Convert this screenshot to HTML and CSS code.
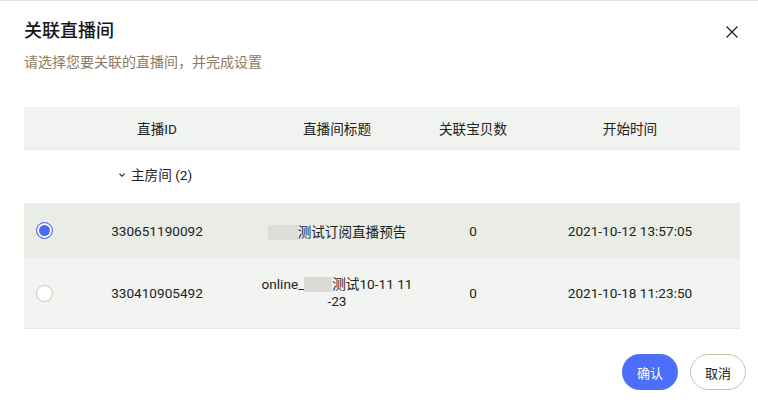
FILE: index.html
```html
<!DOCTYPE html>
<html lang="zh-CN">
<head>
    <meta charset="UTF-8">
    <title>关联直播间</title>
    <link rel="stylesheet" href="styles.css">
</head>
<body>
    <div class="dialog">
        <div class="dialogHead">
            <div>
                <h1 class="dialogTitle">关联直播间</h1>
                <p class="dialogDesc">请选择您要关联的直播间，并完成设置</p>
            </div>
            <button class="closeBtn" aria-label="关闭">
                <svg width="14" height="14" viewBox="0 0 14 14">
                    <path d="M1.5 1.5 L12.5 12.5 M12.5 1.5 L1.5 12.5" stroke="#222" stroke-width="1.3" fill="none"/>
                </svg>
            </button>
        </div>

        <table class="liveTable">
            <colgroup>
                <col class="colRadio">
                <col class="colId">
                <col class="colTitle">
                <col class="colCount">
                <col class="colTime">
            </colgroup>
            <thead>
                <tr>
                    <th></th>
                    <th>直播ID</th>
                    <th>直播间标题</th>
                    <th>关联宝贝数</th>
                    <th>开始时间</th>
                </tr>
            </thead>
            <tbody>
                <tr class="groupRow">
                    <td></td>
                    <td colspan="4">
                        <span class="groupName">
                            <svg width="8" height="8" viewBox="0 0 8 8"><path d="M1.5 2.8 L4 5.2 L6.5 2.8" stroke="#333" stroke-width="1.2" fill="none"/></svg>
                            主房间 (2)
                        </span>
                    </td>
                </tr>
                <tr class="dataRow selected">
                    <td><span class="radio checked"></span></td>
                    <td>330651190092</td>
                    <td><span class="blurBox"></span>测试订阅直播预告</td>
                    <td>0</td>
                    <td>2021-10-12 13:57:05</td>
                </tr>
                <tr class="dataRow">
                    <td><span class="radio"></span></td>
                    <td>330410905492</td>
                    <td class="wrapTitle">online_<span class="blurBox small"></span>测试10-11 11<br>-23</td>
                    <td>0</td>
                    <td>2021-10-18 11:23:50</td>
                </tr>
            </tbody>
        </table>

        <div class="dialogFoot">
            <button class="btn btnPrimary">确认</button>
            <button class="btn btnGhost">取消</button>
        </div>
    </div>
</body>
</html>
```

FILE: styles.css
```css
body {
    margin: 0;
    background-color: #ffffff;
    font-family: Roboto, "Noto Sans CJK SC", sans-serif;
    color: #222222;
}

.dialog {
    height: 403px;
    border-top: 1px solid #dddddd;
    padding: 0 18px 0 24px;
    box-sizing: border-box;
    display: flex;
    flex-direction: column;
}

.dialogHead {
    display: flex;
    justify-content: space-between;
    align-items: flex-start;
    padding-top: 17px;
}

.dialogTitle {
    margin: 0;
    font-size: 18px;
    font-weight: 500;
    line-height: 26px;
    color: #151515;
}

.dialogDesc {
    margin: 8px 0 0 0;
    font-size: 14px;
    line-height: 20px;
    color: #8a7d62;
}

.closeBtn {
    border: none;
    background: none;
    padding: 0;
    margin: 6px 0 0 0;
    width: 16px;
    height: 16px;
    display: flex;
    align-items: center;
    justify-content: center;
    cursor: pointer;
}

.liveTable {
    margin-top: 35px;
    width: 716px;
    border-collapse: collapse;
    table-layout: fixed;
    font-size: 13.6px;
}

.colRadio { width: 42px; }
.colId { width: 182px; }
.colTitle { width: 178px; }
.colCount { width: 94px; }
.colTime { width: 220px; }

.liveTable th {
    height: 42px;
    background-color: #f0f3ef;
    font-weight: 400;
    color: #222222;
    border-bottom: 1px solid #e6e9e4;
    text-align: center;
    padding: 0;
}

.liveTable td {
    text-align: center;
    padding: 0 8px;
}

.groupRow td {
    height: 38px;
    text-align: left;
    vertical-align: top;
    padding: 15px 0 0 0;
}

.groupName {
    display: inline-flex;
    align-items: center;
    gap: 5px;
    margin-left: 52px;
    font-size: 13.6px;
    line-height: 20px;
}

.dataRow td {
    height: 55px;
    background-color: #f1f4f0;
}

.dataRow.selected td {
    background-color: #e9ede5;
}

.dataRow:last-child td {
    height: 70px;
    border-bottom: 1px solid #e6e9e4;
    line-height: 17px;
}

.radio {
    display: inline-block;
    width: 17px;
    height: 17px;
    border: 1px solid #c9c4b6;
    border-radius: 50%;
    background-color: #ffffff;
    box-sizing: border-box;
    vertical-align: middle;
    margin-left: -1px;
}

.radio.checked {
    border: 1px solid #4b6bf5;
    background-color: #4b6bf5;
    box-shadow: inset 0 0 0 2px #ffffff;
}

.blurBox {
    display: inline-block;
    width: 30px;
    height: 15px;
    background-color: #dddcd8;
    vertical-align: -3px;
}

.blurBox.small {
    width: 28px;
    background-color: #d9d9d6;
}

.dialogFoot {
    display: flex;
    justify-content: flex-end;
    gap: 12px;
    margin-top: 25px;
    margin-right: -6px;
}

.btn {
    width: 56px;
    height: 36px;
    border-radius: 18px;
    font-family: "Noto Sans CJK SC", sans-serif;
    font-size: 13px;
    cursor: pointer;
    padding: 0;
}

.btnPrimary {
    border: none;
    background-color: #4d6ef8;
    color: #ffffff;
}

.btnGhost {
    border: 1px solid #c9bfa6;
    background-color: #ffffff;
    color: #222222;
}
```
